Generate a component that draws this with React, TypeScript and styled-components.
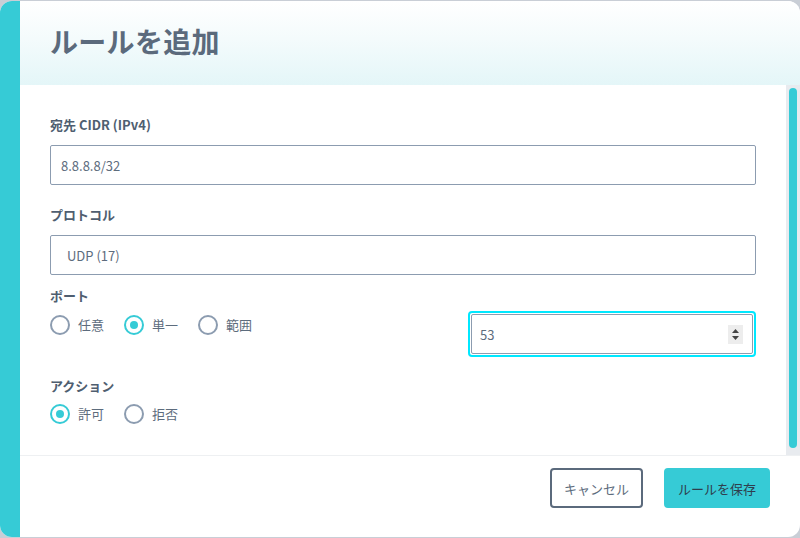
import styled, { createGlobalStyle } from "styled-components";
import { useState } from "react";

const COLORS = {
  TEAL: "#36cbd6",
  TEXT: "#4f5e70",
  TITLE: "#5b6a7c",
  BORDER: "#8c9cb0",
  INPUT_TEXT: "#5d6c7d",
};

const GlobalStyle = createGlobalStyle`
  html, body {
    margin: 0;
    padding: 0;
    background: #c9ced6;
    font-family: "Noto Sans CJK JP", "Noto Sans", sans-serif;
  }
  * {
    box-sizing: border-box;
  }
`;

const Dialog = styled.div`
  margin-top: 1px;
  width: 800px;
  height: 536px;
  display: flex;
  background: #ffffff;
  border-radius: 12px;
  overflow: hidden;
`;

const Accent = styled.div`
  width: 20px;
  flex-shrink: 0;
  background: ${COLORS.TEAL};
`;

const Main = styled.div`
  flex: 1;
  display: flex;
  flex-direction: column;
  min-width: 0;
`;

const Header = styled.div`
  height: 84px;
  flex-shrink: 0;
  display: flex;
  align-items: center;
  padding: 0 30px 4px;
  background: linear-gradient(180deg, #ffffff 0%, #f4fbfc 45%, #e4f6f8 100%);
`;

const Title = styled.h1`
  margin: 0;
  font-size: 28px;
  font-weight: 700;
  color: ${COLORS.TITLE};
  letter-spacing: 0.3px;
`;

const BodyRow = styled.div`
  height: 370px;
  flex-shrink: 0;
  display: flex;
`;

const Content = styled.div`
  flex: 1;
  overflow: hidden;
  padding: 31px 30px 0 30px;
  display: flex;
  flex-direction: column;
`;

const ScrollTrack = styled.div`
  width: 14px;
  flex-shrink: 0;
  background: #e8ebef;
  padding: 3px 3px 7px 3px;
  display: flex;
`;

const ScrollThumb = styled.div`
  flex: 1;
  border-radius: 4px;
  background: ${COLORS.TEAL};
`;

const Field = styled.div<{ $gap?: number; $spacing?: number }>`
  display: flex;
  flex-direction: column;
  gap: ${(p) => p.$gap ?? 11}px;
  margin-bottom: ${(p) => p.$spacing ?? 0}px;
`;

const Label = styled.label`
  font-size: 13px;
  font-weight: 700;
  color: ${COLORS.TEXT};
  line-height: 18px;
`;

const TextInput = styled.input<{ $indent?: number }>`
  height: 40px;
  width: 100%;
  border: 1px solid ${COLORS.BORDER};
  border-radius: 2px;
  padding: 0 0 0 ${(p) => p.$indent ?? 10}px;
  font-family: inherit;
  font-size: 13px;
  color: ${COLORS.INPUT_TEXT};
  background: #fff;
  outline: none;
`;

const PortRow = styled.div`
  display: grid;
  grid-template-columns: 1fr 288px;
  gap: 14px;
  align-items: start;
  margin-bottom: 20px;
`;

const RadioGroup = styled.div`
  display: flex;
  gap: 20px;
  align-items: center;
`;

const RadioOption = styled.label`
  display: flex;
  align-items: center;
  gap: 8px;
  font-size: 13px;
  color: ${COLORS.INPUT_TEXT};
  cursor: pointer;
  line-height: 20px;
`;

const RadioCircle = styled.span<{ $checked: boolean }>`
  width: 20px;
  height: 20px;
  border-radius: 50%;
  border: 2px solid ${(p) => (p.$checked ? COLORS.TEAL : COLORS.BORDER)};
  display: flex;
  align-items: center;
  justify-content: center;

  &::after {
    content: "";
    width: 8px;
    height: 8px;
    border-radius: 50%;
    background: ${(p) => (p.$checked ? COLORS.TEAL : "transparent")};
  }
`;

const NumberWrap = styled.div`
  margin-top: 24px;
  height: 46px;
  border: 2px solid #00e8ff;
  border-radius: 4px;
  padding: 1px;
`;

const NumberField = styled.div`
  height: 100%;
  border: 1px solid ${COLORS.BORDER};
  border-radius: 2px;
  display: flex;
  align-items: center;
  justify-content: space-between;
  padding: 0 9px 0 8px;
  font-size: 13px;
  color: ${COLORS.INPUT_TEXT};
`;

const Spinner = styled.span`
  width: 15px;
  height: 19px;
  background: #ededed;
  display: flex;
  align-items: center;
  justify-content: center;
`;

const Footer = styled.div`
  flex: 1;
  border-top: 1px solid #eef0f2;
  display: flex;
  justify-content: flex-end;
  align-items: flex-start;
  gap: 21px;
  padding: 12px 30px 0 0;
`;

const Button = styled.button<{ $primary?: boolean }>`
  height: 40px;
  padding: 0 12px;
  border-radius: 4px;
  font-family: inherit;
  font-size: 13px;
  cursor: pointer;
  border: 2px solid ${(p) => (p.$primary ? COLORS.TEAL : "#5b6a7c")};
  background: ${(p) => (p.$primary ? COLORS.TEAL : "#fff")};
  color: ${(p) => (p.$primary ? "#2f3e4e" : COLORS.INPUT_TEXT)};
`;

const PORT_OPTIONS = ["任意", "単一", "範囲"];
const ACTION_OPTIONS = ["許可", "拒否"];

const Radio = ({
  label,
  checked,
  onClick,
}: {
  label: string;
  checked: boolean;
  onClick: () => void;
}) => (
  <RadioOption onClick={onClick}>
    <RadioCircle $checked={checked} />
    {label}
  </RadioOption>
);

const App = () => {
  const [port, setPort] = useState("単一");
  const [action, setAction] = useState("許可");

  return (
    <>
      <GlobalStyle />
      <Dialog>
        <Accent />
        <Main>
          <Header>
            <Title>ルールを追加</Title>
          </Header>
          <BodyRow>
            <Content>
              <Field $spacing={21}>
                <Label>宛先 CIDR (IPv4)</Label>
                <TextInput defaultValue="8.8.8.8/32" />
              </Field>
              <Field $spacing={12}>
                <Label>プロトコル</Label>
                <TextInput defaultValue="UDP (17)" $indent={16} />
              </Field>
              <PortRow>
                <Field $gap={10}>
                  <Label>ポート</Label>
                  <RadioGroup>
                    {PORT_OPTIONS.map((option) => (
                      <Radio
                        key={option}
                        label={option}
                        checked={port === option}
                        onClick={() => setPort(option)}
                      />
                    ))}
                  </RadioGroup>
                </Field>
                <NumberWrap>
                  <NumberField>
                    53
                    <Spinner>
                      <svg width="9" height="13" viewBox="0 0 9 13">
                        <path d="M4.5 1 L8 5 L1 5 Z" fill="#444" />
                        <path d="M4.5 12 L8 8 L1 8 Z" fill="#444" />
                      </svg>
                    </Spinner>
                  </NumberField>
                </NumberWrap>
              </PortRow>
              <Field $gap={9}>
                <Label>アクション</Label>
                <RadioGroup>
                  {ACTION_OPTIONS.map((option) => (
                    <Radio
                      key={option}
                      label={option}
                      checked={action === option}
                      onClick={() => setAction(option)}
                    />
                  ))}
                </RadioGroup>
              </Field>
            </Content>
            <ScrollTrack>
              <ScrollThumb />
            </ScrollTrack>
          </BodyRow>
          <Footer>
            <Button>キャンセル</Button>
            <Button $primary>ルールを保存</Button>
          </Footer>
        </Main>
      </Dialog>
    </>
  );
};

export default App;
